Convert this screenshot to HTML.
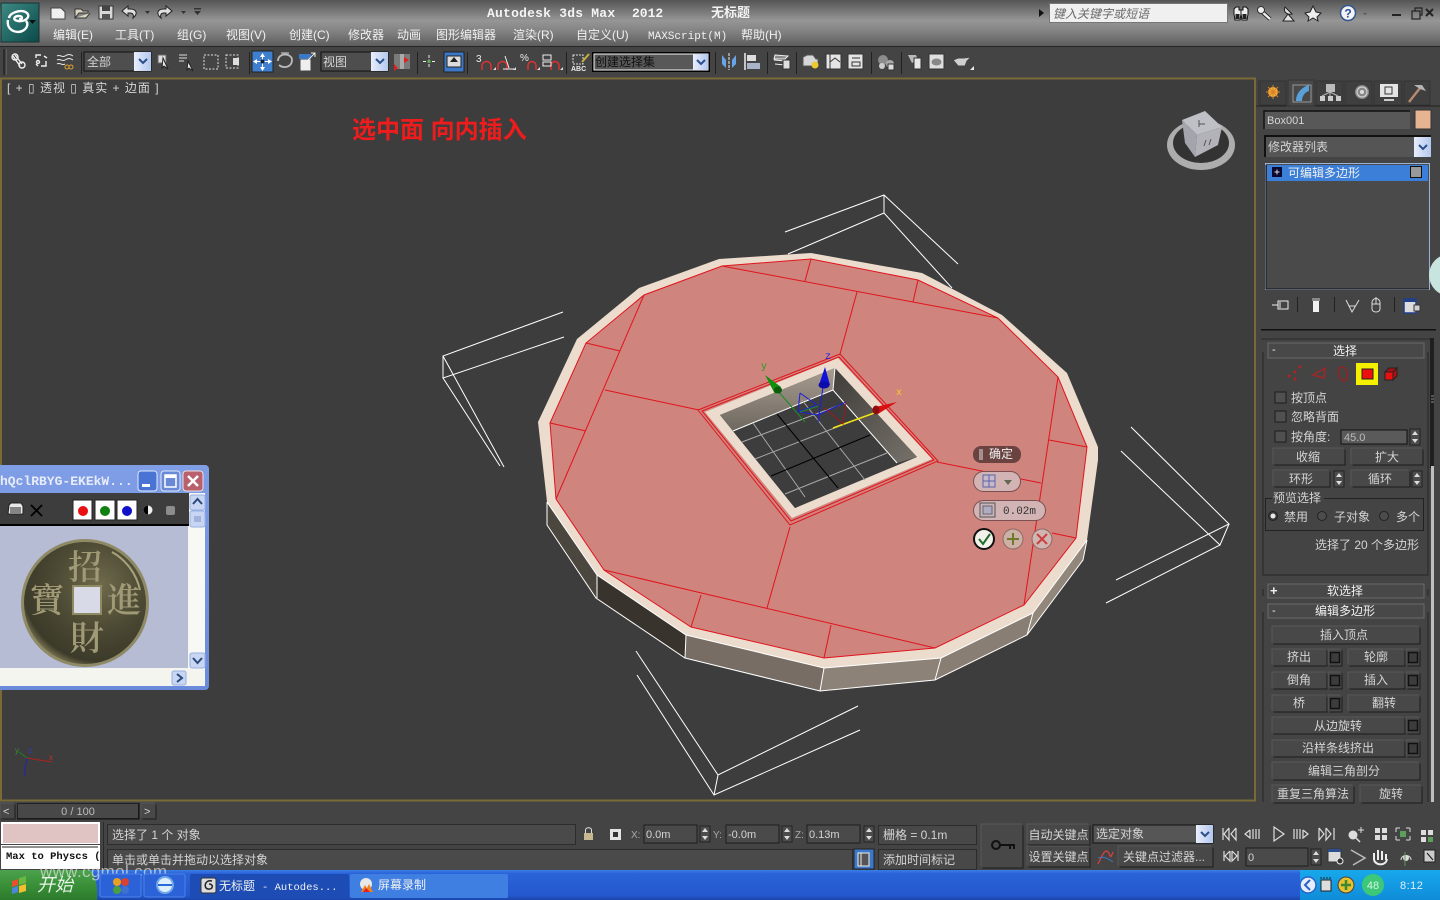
<!DOCTYPE html>
<html lang="zh"><head><meta charset="utf-8"><title>Autodesk 3ds Max 2012</title>
<style>
html,body{margin:0;padding:0;width:1440px;height:900px;overflow:hidden;background:#3d3d3d}
svg{display:block;position:absolute;left:0;top:0}
text{font-family:"Liberation Sans","Noto Sans CJK SC",sans-serif;font-size:12px;fill:#d4d4d4}
.m{text-anchor:middle}
.w{fill:#f0f0f0}
.mono{font-family:"Liberation Mono","Noto Sans CJK SC",monospace}
.b{fill:#484848;stroke:none;filter:drop-shadow(1px 1px 0 #1c1c1c) drop-shadow(-1px -1px 0 #585858)}
.f{fill:#585858;stroke:#222;stroke-width:1}
.e{fill:#4a4a4a;stroke:#1d1d1d;stroke-width:1}
.sm{fill:#3c3c3c;stroke:#111;stroke-width:1.5}
.bl{fill:none;stroke:#eee;stroke-width:1}
.rd{fill:none;stroke:#e0141c;stroke-width:1}
.wt{fill:none;stroke:#fff;stroke-width:1}
.ic{fill:none;stroke:#ddd;stroke-width:1.4}
.ib{fill:none;stroke:#f0f0f0;stroke-width:1.4}
</style></head><body>
<svg width="1440" height="900" viewBox="0 0 1440 900" xmlns="http://www.w3.org/2000/svg">
<defs>
<linearGradient id="top" x1="0" y1="0" x2="0" y2="1"><stop offset="0" stop-color="#555"/><stop offset=".45" stop-color="#969696"/><stop offset=".72" stop-color="#7e7e7e"/><stop offset="1" stop-color="#5c5c5c"/></linearGradient>
<linearGradient id="tb" x1="0" y1="0" x2="0" y2="1"><stop offset="0" stop-color="#3a7ee8"/><stop offset=".12" stop-color="#2a63d8"/><stop offset=".85" stop-color="#2458cf"/><stop offset="1" stop-color="#1a45a8"/></linearGradient>
<linearGradient id="st" x1="0" y1="0" x2="0" y2="1"><stop offset="0" stop-color="#4da24d"/><stop offset=".5" stop-color="#3a9038"/><stop offset="1" stop-color="#2c7a2c"/></linearGradient>
<linearGradient id="tray" x1="0" y1="0" x2="0" y2="1"><stop offset="0" stop-color="#18a8ec"/><stop offset="1" stop-color="#0f8cd8"/></linearGradient>
<linearGradient id="logo" x1="0" y1="0" x2="1" y2="1"><stop offset="0" stop-color="#3d8a84"/><stop offset="1" stop-color="#0b4a48"/></linearGradient>
<linearGradient id="win" x1="0" y1="0" x2="0" y2="1"><stop offset="0" stop-color="#7f9ee6"/><stop offset="1" stop-color="#6a8adb"/></linearGradient>
<linearGradient id="wall1" x1="0" y1="0" x2="0" y2="1"><stop offset="0" stop-color="#a89c90"/><stop offset="1" stop-color="#6e6860"/></linearGradient>
<linearGradient id="wall2" x1="0" y1="0" x2="1" y2="1"><stop offset="0" stop-color="#3f3d3a"/><stop offset="1" stop-color="#77716a"/></linearGradient>
<linearGradient id="chev" x1="0" y1="0" x2="1" y2="0"><stop offset="0" stop-color="#e8eefc"/><stop offset="1" stop-color="#b4c8ee"/></linearGradient>
<radialGradient id="coin" cx=".62" cy=".35" r=".7"><stop offset="0" stop-color="#6e6a4c"/><stop offset=".55" stop-color="#4b4833"/><stop offset=".9" stop-color="#3c3a29"/><stop offset="1" stop-color="#7a7552"/></radialGradient>
<g id="chv"><path d="M-4-2 0 2 4-2" fill="none" stroke="#2a4f8e" stroke-width="2"/></g>
<g id="spin"><rect x="-5" y="-8" width="10" height="16" fill="#4c4c4c" stroke="#222"/><path d="M-3-2 0-6 3-2zM-3 2 0 6 3 2z" fill="#ddd"/></g>
</defs>

<!-- base chrome -->
<rect width="1440" height="900" fill="#444"/>
<rect width="1440" height="46" fill="url(#top)"/>
<rect y="46" width="1440" height="1" fill="#262626"/>
<rect y="47" width="1440" height="30" fill="#444"/>

<!-- viewport -->
<rect x="1" y="78.5" width="1254" height="722" fill="#3d3d3d" stroke="#7a6a38" stroke-width="2"/>

<!-- wireframe box brackets -->
<g fill="none" stroke="#fff" stroke-width="1">
<path d="M785 232 884 195 958 264M788 254 884 213 952 288M884 195V213" fill="none"/>
<path d="M563 312 443 356 504 467M564 337 443 378 500 466M443 356V378" fill="none"/>
<path d="M1131 427 1229 524 1116 580M1121 451 1220 545 1106 603M1229 524 1220 545" fill="none"/>
<path d="M636 651 718 775 858 706M637 675 714 795 860 730M718 775 714 795" fill="none"/>
</g>

<!-- sides -->
<polygon points="547,502 597,575 596,598 547,525" fill="#4b473f"/>
<polygon points="597,575 686,635 685,658 596,598" fill="#39332d"/>
<polygon points="686,635 824,668 820,691 685,658" fill="#776d64"/>
<polygon points="824,668 941,658 935,680 820,691" fill="#8c8278"/>
<polygon points="941,658 1033,613 1027,635 935,680" fill="#887e74"/>
<polygon points="1033,613 1087,540 1083,560 1027,635" fill="#91877a"/>
<path d="M547 502 547 525 596 598 685 658 820 691 935 680 1027 635 1083 560 1087 540M597 575V598M686 635 685 658M824 668 820 691M941 658 935 680M1033 613 1027 635" class="wt"/>
<!-- rim -->
<polygon points="538,422 577,339 639,288 719,259 811,253 922,273 1002,315 1067,373 1098,447 1098,460 1087,540 1033,613 941,658 824,668 686,635 597,575 547,502" fill="#ecdccd"/>
<path d="M547 502 597 575 686 635 824 668 941 658 1033 613 1087 540" class="wt"/>
<!-- top -->
<polygon points="550,423 586,343 644,295 722,266 811,259 918,280 998,318 1058,377 1087,447 1076,538 1024,605 935,648 824,658 691,627 604,570 556,499" fill="#d0847e" stroke="#e0141c" stroke-width="1"/>
<!-- polygon red lines -->
<path class="rd" d="M722 266 998 318M811 259 805 281M918 280 913 302M857 292 840 354M644 295 556 499M586 343 620 351M550 423 586 431M605 390 699 410M1058 377 1024 605M1049 440 1087 447M1076 538 1052 533M937 462 1041 483M790 527 767 608M604 570 935 648M701 595 691 627M831 625 824 658"/>
<!-- hole -->
<polygon points="698,410 840,354 938,461 790,525" fill="#d0847e" stroke="#e0141c" stroke-width="1"/>
<polygon points="702,411 839,357 934,460 791,521" fill="#d0847e" stroke="#e0141c" stroke-width="1"/>
<polygon points="705,412 838,358 932,459 792,518" fill="#ecdccd"/>
<polygon points="720,415 835,368 917,457 795,508" fill="#3d3d3d"/>
<polygon points="720,415 835,368 833,390 733,431" fill="url(#wall1)"/>
<polygon points="835,368 917,457 897,463 833,390" fill="url(#wall2)"/>
<polygon points="733,431 833,390 897,463 795,508" fill="#3d3d3d"/>
<path d="M733 431 833 390 897 463M835 368 833 390" class="wt"/>
<path d="M753 423 805 497M802 400 865 480M742 442 840 405M755 459 850 422M785 494 887 453" fill="none" stroke="#a9a9a9" stroke-width="1"/>
<path d="M777 414 838 488M771 476 870 435" fill="none" stroke="#000" stroke-width="1"/>
<!-- gizmo -->
<path d="M777 390 805 422" stroke="#1e8c1e" stroke-width="1" fill="none"/>
<path d="M823 387 818 422" stroke="#1c1ce0" stroke-width="1" fill="none"/>
<path d="M833 428 877 412" stroke="#f0e21a" stroke-width="1.5" fill="none"/>
<path d="M800 393 798 412 817 405 800 393M818 415 846 402M818 415 800 412" stroke="#1c1ce0" fill="none" stroke-width="1"/>
<path d="M846 402 843 424 825 408" stroke="#a01818" fill="none" stroke-width="1"/>
<path d="M800 412 818 406" stroke="#1e8c1e" fill="none" stroke-width="1"/>
<polygon points="765,375 781,387 775,394" fill="#109010"/>
<ellipse cx="778" cy="390" rx="4" ry="3.5" fill="#0c5c0c"/>
<polygon points="825,367 830,385 819,385" fill="#1010d8"/>
<ellipse cx="824" cy="385" rx="5.5" ry="3.5" fill="#0c0ca8"/>
<polygon points="897,402 875,407 878,414" fill="#d81010"/>
<ellipse cx="876" cy="410" rx="3.5" ry="4.5" fill="#900c0c"/>
<text x="761" y="369" style="font-size:10px;fill:#1ea01e;font-family:'Liberation Mono'">y</text>
<text x="825" y="359" style="font-size:10px;fill:#2020e0;font-family:'Liberation Mono'">z</text>
<text x="896" y="395" style="font-size:10px;fill:#f0d020;font-family:'Liberation Mono'">x</text>

<!-- caddy -->
<rect x="973" y="446" width="48" height="17" rx="8" fill="#6a4240"/>
<path d="M980 449V460M982 449V460" stroke="#ddd" stroke-width="1"/>
<text x="989" y="458" class="w">确定</text>
<rect x="973.500" y="471.500" width="47" height="20" rx="10" fill="#d2b4b4" stroke="#7a5050"/>
<rect x="983" y="475" width="12" height="12" fill="#c8b8c8" stroke="#5a64a8"/><path d="M989 475V487M983 481H995" stroke="#5a64a8"/>
<path d="M1004 480H1012L1008 485z" fill="#665"/>
<rect x="973.500" y="500.500" width="72" height="20" rx="10" fill="#d2b4b4" stroke="#7a5050"/>
<rect x="980" y="503" width="15" height="14" fill="#c9b4bc" stroke="#555"/><rect x="983" y="506" width="9" height="8" fill="#b0acc4" stroke="#666"/>
<text x="1003" y="514" class="mono" style="fill:#333;font-size:11px">0.02m</text>
<circle cx="984" cy="539" r="10" fill="#f2f2ea" stroke="#111" stroke-width="2"/>
<path d="M979 539 983 544 990 534" fill="none" stroke="#1f6a2e" stroke-width="2"/>
<circle cx="1013" cy="539" r="10" fill="#cdb0a6" stroke="#8a6a64"/>
<path d="M1013 533V545M1007 539H1019" stroke="#6c7a2a" stroke-width="2"/>
<circle cx="1042" cy="539" r="10" fill="#d2b4b0" stroke="#8a6a64"/>
<path d="M1037 534 1047 544M1047 534 1037 544" stroke="#c84040" stroke-width="2"/>

<!-- viewport label & title -->
<text x="7" y="92" style="letter-spacing:1px">[ + ▯ 透视 ▯ 真实 + 边面 ]</text>
<text x="352" y="138" style="font-size:24px;font-weight:bold;fill:#ee1c1c">选中面 向内插入</text>

<!-- viewcube -->
<ellipse cx="1201" cy="145" rx="34" ry="25" fill="#adadad"/>
<ellipse cx="1201" cy="143" rx="28" ry="20" fill="#333"/>
<polygon points="1182,120 1205,111 1222,127 1197,135" fill="#bfbfc6"/>
<polygon points="1182,120 1197,135 1195,157 1185,143" fill="#a4a4ac"/>
<polygon points="1197,135 1222,127 1218,145 1195,157" fill="#b2b2b8"/>
<path d="M1199 120V127M1199 124H1205M1206 140 1204 146M1211 139 1209 145" stroke="#555" fill="none"/>

<!-- tripod -->
<path d="M27 758 24 776" stroke="#2020c0"/><path d="M27 758 52 762" stroke="#b02020"/><path d="M27 758 19 752" stroke="#208020"/>
<text x="15" y="753" style="font-size:8px;fill:#389038">y</text><text x="28" y="753" style="font-size:8px;fill:#3838c0">z</text><text x="49" y="760" style="font-size:8px;fill:#c03030">x</text>

<!-- title bar -->
<text x="487" y="17" class="mono" style="font-size:13px;font-weight:bold;fill:#f4f4f4;letter-spacing:.22px">Autodesk 3ds Max</text>
<text x="632" y="17" class="mono" style="font-size:13px;font-weight:bold;fill:#f4f4f4">2012</text>
<text x="711" y="17" style="font-weight:bold;fill:#f4f4f4;font-size:13px">无标题</text>

<!-- app logo -->
<rect x="1" y="3" width="38" height="39" fill="url(#logo)" stroke="#1b2f2f"/>
<path d="M9 18C10 12 22 9 27 13 31 17 25 22 18 21 12 20 14 16 19 16 23 16 23 20 19 19M8 20C6 30 17 35 24 30 28 27 28 23 26 21" fill="none" stroke="#fff" stroke-width="2.4"/>
<path d="M29 20H36L32.500 24z" fill="#111"/>

<!-- quick access -->
<path d="M51 8H61L65 12V19H51z" fill="#f0f0f0" stroke="#444"/>
<path d="M75 18V9H81L83 11H88V13H79L75 18H86L90 13" fill="#d8d4c0" stroke="#333"/>
<rect x="99" y="6" width="14" height="13" fill="#d8d8d8" stroke="#333"/><rect x="102" y="6" width="8" height="5" fill="#444"/><rect x="102" y="14" width="8" height="5" fill="#555"/>
<path d="M133 18C138 14 137 9 130 9H128V6L122 11 128 16V13H130C133 13 134 15 133 18z" fill="#e0e0e0" stroke="#222"/>
<path d="M161 18C156 14 157 9 164 9H166V6L172 11 166 16V13H164C161 13 160 15 161 18z" fill="#e0e0e0" stroke="#222"/>
<path d="M145 11H150L147.500 14zM181 11H186L183.500 14zM194 8H201V9.500H194zM194 11H201L197.500 15z" fill="#333"/>

<!-- menu -->
<g>
<text x="53" y="39" class="w">编辑(E)</text>
<text x="115" y="39" class="w">工具(T)</text>
<text x="177" y="39" class="w">组(G)</text>
<text x="226" y="39" class="w">视图(V)</text>
<text x="289" y="39" class="w">创建(C)</text>
<text x="348" y="39" class="w">修改器</text>
<text x="397" y="39" class="w">动画</text>
<text x="436" y="39" class="w">图形编辑器</text>
<text x="513" y="39" class="w">渲染(R)</text>
<text x="576" y="39" class="w">自定义(U)</text>
<text x="648" y="39" class="w mono" style="font-size:11px">MAXScript(M)</text>
<text x="741" y="39" class="w">帮助(H)</text>
</g>

<!-- search + title icons -->
<path d="M1039 9 1044 13 1039 17z" fill="#111"/>
<rect x="1049.500" y="3.500" width="178" height="19" fill="#f0f0f0" stroke="#777"/>
<text x="1053" y="18" style="fill:#6a6a6a;font-style:italic">键入关键字或短语</text>
<g stroke="#111"><path d="M1236 7H1239V10H1241V14L1240 20H1235L1234 14V9z" fill="#eee"/><path d="M1246 7H1243V10H1241V14L1242 20H1247L1248 14V9z" fill="#eee"/></g>
<rect x="1235.500" y="14" width="4" height="5" fill="#222"/><rect x="1242.500" y="14" width="4" height="5" fill="#222"/>
<path d="M1260 10 1270 19" stroke="#111" stroke-width="4" fill="none"/><path d="M1260 10 1270 19" stroke="#eee" stroke-width="2.500" fill="none"/><circle cx="1261" cy="10" r="3.500" fill="#eee" stroke="#333"/>
<path d="M1285 7C1283 12 1287 15 1292 14zM1283 21 1288 14 1294 21z" fill="#e4e4e4" stroke="#222"/>
<polygon points="1313,6 1316,12 1321,13 1317,17 1318,21 1313,18 1308,21 1309,17 1305,13 1310,12" fill="#eee" stroke="#222"/>
<circle cx="1348" cy="13" r="7.500" fill="#f2f2f2" stroke="#33548e" stroke-width="1.500"/>
<text x="1348" y="17.500" class="m" style="font-weight:bold;fill:#2a4f9e">?</text>
<path d="M1363 13H1367L1365 15z" fill="#555"/>
<rect x="1392" y="14" width="9" height="2" fill="#222"/>
<rect x="1412" y="11" width="8" height="8" fill="none" stroke="#222" stroke-width="1.200"/><path d="M1415 11V8H1422V15H1420" fill="none" stroke="#222" stroke-width="1.200"/>
<path d="M1426 9 1433 16M1433 9 1426 16" stroke="#222" stroke-width="2"/>

<!-- main toolbar -->
<rect x="3" y="49" width="2" height="26" fill="#2c2c2c"/><rect x="6" y="49" width="1" height="26" fill="#5d5d5d"/>
<g class="ib">
<path d="M13 56 20 66M15 55 22 64" /><circle cx="15" cy="57" r="3"/><circle cx="22" cy="65" r="3"/>
<path d="M36 58 36 55 41 55M46 61 46 66 41 66M36 64 38 66M44 56 47 58"/><circle cx="38" cy="62" r="1.500"/>
</g>
<path d="M57 56C60 54 62 58 65 56S70 54 73 56M57 60C60 58 62 62 65 60S70 58 73 60M57 64C60 62 62 66 65 64" fill="none" stroke="#e8e8e8" stroke-width="1"/>
<circle cx="67" cy="67" r="2" fill="none" stroke="#e0a030"/><circle cx="71" cy="67" r="2" fill="none" stroke="#e0a030"/>
<rect x="81" y="52" width="1" height="22" fill="#222"/>
<rect x="84" y="52" width="67" height="19" fill="#4e4e4e" stroke="#111"/>
<text x="87" y="66">全部</text>
<rect x="134" y="52" width="17" height="19" fill="url(#chev)"/><use href="#chv" x="143" y="61"/>
<path d="M158 55H166V63H158z" fill="#ddd" stroke="#666"/><path d="M163 58 168 69 164 66 162 68z" fill="#eee" stroke="#222"/>
<path d="M179 55H187M179 58H187M179 61H184" stroke="#ddd"/><path d="M188 61 193 71 189 68 187 70z" fill="#eee" stroke="#222"/>
<rect x="204" y="55" width="14" height="14" fill="none" stroke="#e0e0e0" stroke-dasharray="2 1.500"/>
<rect x="226" y="55" width="12" height="13" fill="none" stroke="#e0e0e0" stroke-dasharray="2 1.500"/><rect x="233" y="58" width="6" height="7" fill="#ddd"/>
<rect x="249" y="52" width="1" height="22" fill="#222"/>
<rect x="252" y="51" width="21" height="21" fill="#3f7fd0" stroke="#222"/>
<path d="M262.500 53 265 57H260zM262.500 71 265 67H260zM253 61.500 257 59V64zM272 61.500 268 59V64z" fill="#fff"/><path d="M262.500 56V68M256 61.500H270" stroke="#fff"/><circle cx="262.500" cy="61.500" r="2" fill="#123"/>
<path d="M278 61C278 52 292 53 292 60S284 69 279 65" fill="none" stroke="#bbb" stroke-width="1.800"/><path d="M281 53H289" stroke="#ddd"/>
<rect x="300" y="59" width="11" height="12" fill="#eee" stroke="#444"/><path d="M299 54H311V59H299z" fill="#3c78c8"/><path d="M308 60 315 53M311 53H315V57" stroke="#eee" fill="none"/>
<rect x="321" y="52" width="67" height="19" fill="#4e4e4e" stroke="#111"/>
<text x="323" y="66">视图</text>
<rect x="371" y="52" width="17" height="19" fill="url(#chev)"/><use href="#chv" x="380" y="61"/>
<rect x="394" y="54" width="16" height="15" fill="#7a7a7a"/><rect x="400" y="54" width="4" height="15" fill="#aaa"/>
<path d="M394 64 398 68 394 71zM404 57 409 60 404 63z" fill="#e02020"/>
<rect x="417" y="52" width="1" height="22" fill="#222"/>
<path d="M429 55V68M423 61.500H436" stroke="#eee" stroke-dasharray="3 1.500"/><rect x="427.500" y="60" width="3" height="3" fill="#5ab05a"/>
<rect x="444" y="52" width="20" height="20" fill="#3c78c8" stroke="#222"/>
<rect x="447" y="56" width="14" height="11" fill="#dcdcdc" stroke="#222"/><path d="M454 57 458 62H450z" fill="#222"/>
<rect x="467" y="52" width="1" height="22" fill="#222"/>
<g fill="none" stroke="#e03030" stroke-width="1.500">
<path d="M482 70V66C482 60 491 60 491 66V70"/><path d="M498 70V66C498 60 507 60 507 66V70"/><path d="M528 70V66C528 60 536 60 536 66V70"/><path d="M551 70V66C551 60 559 60 559 66V70"/>
</g>
<text x="476" y="62" style="font-size:10px;fill:#eee">3</text>
<path d="M505 56 509 68M503 69H514" stroke="#eee" fill="none"/>
<text x="520" y="61" style="font-size:10px;fill:#eee">%</text>
<path d="M543 55H551V60H543zM543 62H551V66H543z" stroke="#eee" fill="none"/>
<path d="M493 70H496V67zM513 70H516V67zM537 70H540V67zM560 70H563V67z" fill="#ddd"/>
<rect x="566" y="52" width="1" height="22" fill="#222"/>
<rect x="573" y="55" width="10" height="9" fill="none" stroke="#ddd" stroke-dasharray="2 1"/><path d="M582 62 589 54" stroke="#c8b040" stroke-width="2"/>
<text x="571" y="71" style="font-size:7px;fill:#eee;font-weight:bold">ABC</text>
<rect x="592" y="52" width="118" height="20" fill="#000"/>
<rect x="594" y="54" width="114" height="16" fill="#585858" stroke="#f5f5f5"/>
<text x="595" y="66" style="fill:#111">创建选择集</text>
<rect x="693" y="54" width="15" height="16" fill="url(#chev)"/><use href="#chv" x="701" y="62"/>
<rect x="715" y="52" width="1" height="22" fill="#222"/>
<path d="M722 55 726 60V68L722 64z" fill="#6aa4e8"/><path d="M736 55 732 60V68L736 64z" fill="#6aa4e8"/><path d="M729 53V70" stroke="#eee" stroke-dasharray="3 1"/>
<path d="M745 53V70" stroke="#eee" stroke-width="1.500"/><rect x="747" y="55" width="9" height="6" fill="#ddd"/><rect x="747" y="63" width="13" height="6" fill="#aab4c8"/>
<rect x="767" y="52" width="1" height="22" fill="#222"/>
<path d="M775 55 788 56 785 59H774zM774 60 786 61M775 64 785 65" stroke="#eee" fill="#888"/><rect x="783" y="60" width="7" height="9" fill="#dfdfdf" stroke="#333"/>
<rect x="796" y="52" width="1" height="22" fill="#222"/>
<path d="M803 57 807 55H813L816 59H818V66H803z" fill="#d6d6d6" stroke="#555"/><circle cx="815" cy="65" r="3.500" fill="#f0c830"/>
<rect x="826" y="54" width="15" height="15" fill="#e4e4e4" stroke="#333"/><path d="M830 54V69M830 62 835 58 840 62" stroke="#333" fill="none"/>
<rect x="848" y="54" width="15" height="15" fill="#e4e4e4" stroke="#333"/><path d="M852 58H860M852 62H860V66H852z" stroke="#333" fill="none"/>
<rect x="871" y="52" width="1" height="22" fill="#222"/>
<circle cx="883" cy="60" r="5" fill="#8c8c8c"/><circle cx="890" cy="64" r="4" fill="#aaa"/><circle cx="882" cy="66" r="3" fill="#ccc"/><rect x="888" y="64" width="6" height="6" fill="#ddd" stroke="#333"/>
<rect x="901" y="52" width="1" height="22" fill="#222"/>
<path d="M908 55H916L918 60 912 63z" fill="#bbb"/><rect x="914" y="58" width="7" height="11" fill="#e8e8e8" stroke="#333"/>
<rect x="929" y="54" width="15" height="15" fill="#dedede" stroke="#333"/><ellipse cx="936.500" cy="62" rx="5" ry="3.500" fill="#888"/>
<path d="M953 60 958 58H964L971 57 967 61 965 66H958z" fill="#d0d0d0" stroke="#444"/>
<path d="M970 70H974V66z" fill="#eee"/>

<!-- right panel -->
<rect x="1256" y="78" width="184" height="724" fill="#444"/>
<rect x="1258" y="80" width="1" height="26" fill="#383838"/>
<g fill="#3f3f3f" stroke="#333"><rect x="1260" y="81" width="26" height="24"/><rect x="1288" y="80" width="26" height="26" fill="#484848"/><rect x="1316" y="81" width="27" height="24"/><rect x="1345" y="81" width="27" height="24"/><rect x="1374" y="81" width="28" height="24"/><rect x="1404" y="81" width="26" height="24"/></g>
<path d="M1256 106H1287M1315 106H1440" stroke="#222"/>
<circle cx="1273" cy="92" r="5" fill="#f2b040"/><path d="M1273 85V99M1266 92H1280M1268 87 1278 97M1278 87 1268 97" stroke="#d88020"/>
<rect x="1293" y="85" width="18" height="17" fill="none" stroke="#999"/>
<path d="M1296 101C1296 93 1302 87 1309 85V91C1305 92 1302 96 1302 101z" fill="#5aa0d8"/>
<rect x="1326" y="84" width="9" height="8" fill="#bbb"/><rect x="1320" y="96" width="5" height="5" fill="#ccc"/><rect x="1328" y="96" width="5" height="5" fill="#ccc"/><rect x="1336" y="96" width="5" height="5" fill="#ccc"/><path d="M1330 92V96M1322 96 1330 92 1338 96" stroke="#bbb" fill="none"/>
<circle cx="1362" cy="92" r="7" fill="#888"/><circle cx="1362" cy="92" r="5" fill="none" stroke="#ddd"/><circle cx="1362" cy="92" r="2" fill="#ddd"/>
<rect x="1380" y="84" width="18" height="13" fill="#e4e4e4"/><rect x="1385" y="87" width="7" height="7" fill="none" stroke="#333"/><path d="M1384 100H1394" stroke="#ccc" stroke-width="2"/>
<path d="M1409 102 1420 88" stroke="#b48a70" stroke-width="2.500"/><path d="M1414 85H1422L1426 91 1420 89z" fill="#b5b5b5"/>

<rect x="1264" y="111" width="146" height="18" fill="#585858"/><path d="M1264 129V111H1410" stroke="#111" stroke-width="1.500" fill="none"/>
<text x="1267" y="124" style="font-size:11px">Box001</text>
<rect x="1415" y="110" width="16" height="19" fill="#e6b491" stroke="#333"/>
<rect x="1265" y="136" width="166" height="21" fill="#555"/><path d="M1265 157V136H1431" stroke="#111" stroke-width="2" fill="none"/>
<text x="1268" y="151">修改器列表</text>
<rect x="1414" y="137" width="17" height="20" fill="url(#chev)"/><use href="#chv" x="1423" y="147"/>
<rect x="1265.500" y="163.500" width="164" height="126" fill="#4a4a4a" stroke="#9ab4d8"/>
<path d="M1266 165V289H1429" stroke="#111" fill="none"/>
<rect x="1267" y="165" width="161" height="16" fill="#3b7fd8"/>
<rect x="1272" y="167" width="10" height="10" fill="#0a0a30"/><path d="M1274.500 172H1279.500M1277 169.500V174.500" stroke="#ddd"/>
<text x="1288" y="177" class="w">可编辑多边形</text>
<rect x="1410.500" y="166.500" width="11" height="11" fill="#999" stroke="#111"/>

<path d="M1272 305H1278M1278 301H1288V309H1278z" stroke="#eee" fill="none"/><path d="M1280 302V308" stroke="#eee"/>
<rect x="1297" y="297" width="1" height="15" fill="#222"/>
<rect x="1313" y="300" width="6" height="12" fill="#f2f2f2"/><rect x="1312" y="298" width="8" height="3" fill="#888"/>
<rect x="1334" y="297" width="1" height="15" fill="#222"/>
<path d="M1346 300 1352 312 1359 300M1349 306H1355" stroke="#ddd" fill="none"/>
<path d="M1372 303C1372 297 1380 297 1380 303V309C1380 313 1372 313 1372 309z" fill="none" stroke="#ddd"/><path d="M1376 297V304M1372 304H1380" stroke="#ddd"/>
<rect x="1394" y="297" width="1" height="15" fill="#222"/>
<rect x="1404" y="299" width="12" height="14" fill="#dcdcdc" stroke="#1f3f88" stroke-width="1.500"/><rect x="1404" y="299" width="12" height="3" fill="#1f3f88"/><rect x="1414" y="305" width="6" height="6" fill="#cfcfcf" stroke="#333"/>
<rect x="1261" y="329" width="175" height="1.500" fill="#111"/>

<!-- scrollbar -->
<rect x="1430" y="338" width="4" height="130" fill="#1f1f1f"/>
<rect x="1431" y="466" width="3" height="336" fill="#bfbfbf"/>
<path d="M1431 396H1434M1431 399H1434M1431 402H1434" stroke="#888"/>
<!-- rollout 选择 -->
<path d="M1263 352V575H1428V352" fill="none" stroke="#262626"/>
<path d="M1261 339H1430" stroke="#2a2a2a"/>
<rect x="1268" y="343" width="156" height="15" fill="#484848" stroke="#6a6a6a"/>
<text x="1272" y="353" class="w" style="font-size:11px">-</text>
<text x="1345" y="355" class="m w">选择</text>
<g fill="#b02222"><circle cx="1289" cy="376" r="1.500"/><circle cx="1295" cy="372" r="1.500"/><circle cx="1300" cy="367" r="1.500"/><circle cx="1295" cy="379" r="1.500"/></g>
<path d="M1313 375 1325 368 1324 378z" fill="none" stroke="#a02828" stroke-width="1.500"/>
<path d="M1342 367C1348 367 1349 380 1344 381 1339 380 1340 375 1338 372 1338 369 1340 367 1342 367" fill="none" stroke="#902424" stroke-width="1.600"/>
<rect x="1356" y="363" width="22" height="22" fill="#f4f000"/>
<rect x="1362" y="369" width="11" height="10" fill="#ee1010" stroke="#222"/>
<path d="M1385 372H1393V380H1385z" fill="#e81010" stroke="#222"/><path d="M1385 372 1389 368H1397L1393 372zM1393 372 1397 368V376L1393 380z" fill="#b01010" stroke="#222"/>
<rect x="1275" y="392" width="11" height="11" fill="#505050" stroke="#1d1d1d"/>
<text x="1291" y="402">按顶点</text>
<rect x="1275" y="411" width="11" height="11" fill="#505050" stroke="#1d1d1d"/>
<text x="1291" y="421">忽略背面</text>
<rect x="1275" y="431" width="11" height="11" fill="#505050" stroke="#1d1d1d"/>
<text x="1291" y="441">按角度:</text>
<rect x="1341" y="430" width="66" height="14" fill="#5a5a5a" stroke="#111"/>
<text x="1344" y="441" style="font-size:11px;fill:#bbb">45.0</text>
<use href="#spin" x="1415" y="437"/>
<rect x="1273.500" y="448.500" width="71" height="16" class="b"/><text x="1308" y="461" class="m">收缩</text>
<rect x="1351.500" y="448.500" width="71" height="16" class="b"/><text x="1387" y="461" class="m">扩大</text>
<rect x="1273.500" y="470.500" width="56" height="16" class="b"/><text x="1301" y="483" class="m">环形</text>
<use href="#spin" x="1339" y="479"/>
<rect x="1351.500" y="470.500" width="58" height="16" class="b"/><text x="1380" y="483" class="m">循环</text>
<use href="#spin" x="1417" y="479"/>
<rect x="1265.500" y="498.500" width="158" height="32" fill="none" stroke="#222"/>
<rect x="1272" y="492" width="52" height="12" fill="#444"/>
<text x="1273" y="502">预览选择</text>
<circle cx="1273" cy="516" r="4.500" fill="#3c3c3c" stroke="#222"/><circle cx="1273" cy="516" r="2.500" fill="#e8e8e8"/>
<text x="1284" y="521">禁用</text>
<circle cx="1322" cy="516" r="4.500" fill="#4c4c4c" stroke="#222"/>
<text x="1334" y="521">子对象</text>
<circle cx="1384" cy="516" r="4.500" fill="#4c4c4c" stroke="#222"/>
<text x="1396" y="521">多个</text>
<text x="1315" y="549">选择了 20 个多边形</text>

<!-- rollouts -->
<rect x="1268" y="584" width="156" height="14" fill="#484848" stroke="#6a6a6a"/>
<text x="1270" y="595" class="w" style="font-size:13px;font-weight:bold">+</text>
<text x="1345" y="595" class="m w">软选择</text>
<rect x="1268" y="604" width="156" height="14" fill="#484848" stroke="#6a6a6a"/>
<text x="1272" y="614" class="w" style="font-size:11px">-</text>
<text x="1345" y="615" class="m w">编辑多边形</text>
<path d="M1263 612V802M1428 612V802M1263 589V596M1428 589V596" fill="none" stroke="#262626"/>

<rect x="1272.500" y="626.500" width="147" height="17" class="b"/><text x="1344" y="639" class="m">插入顶点</text>
<rect x="1272.500" y="649.500" width="54" height="16" class="b"/><text x="1299" y="661" class="m">挤出</text>
<rect x="1328.500" y="649.500" width="13" height="16" class="b"/><rect x="1330.500" y="652.500" width="9" height="10" class="sm"/>
<rect x="1348.500" y="649.500" width="56" height="16" class="b"/><text x="1376" y="661" class="m">轮廓</text>
<rect x="1406.500" y="649.500" width="13" height="16" class="b"/><rect x="1408.500" y="652.500" width="9" height="10" class="sm"/>
<rect x="1272.500" y="672.500" width="54" height="16" class="b"/><text x="1299" y="684" class="m">倒角</text>
<rect x="1328.500" y="672.500" width="13" height="16" class="b"/><rect x="1330.500" y="675.500" width="9" height="10" class="sm"/>
<rect x="1348.500" y="672.500" width="56" height="16" class="b"/><text x="1376" y="684" class="m">插入</text>
<rect x="1406.500" y="672.500" width="13" height="16" class="b"/><rect x="1408.500" y="675.500" width="9" height="10" class="sm"/>
<rect x="1272.500" y="695.500" width="54" height="16" class="b"/><text x="1299" y="707" class="m">桥</text>
<rect x="1328.500" y="695.500" width="13" height="16" class="b"/><rect x="1330.500" y="698.500" width="9" height="10" class="sm"/>
<rect x="1348.500" y="695.500" width="71" height="16" class="b"/><text x="1384" y="707" class="m">翻转</text>
<rect x="1272.500" y="717.500" width="132" height="16" class="b"/><text x="1338" y="730" class="m">从边旋转</text>
<rect x="1406.500" y="717.500" width="13" height="16" class="b"/><rect x="1408.500" y="720.500" width="9" height="10" class="sm"/>
<rect x="1272.500" y="740.500" width="132" height="16" class="b"/><text x="1338" y="752" class="m">沿样条线挤出</text>
<rect x="1406.500" y="740.500" width="13" height="16" class="b"/><rect x="1408.500" y="743.500" width="9" height="10" class="sm"/>
<rect x="1272.500" y="762.500" width="147" height="17" class="b"/><text x="1344" y="775" class="m">编辑三角剖分</text>
<rect x="1272.500" y="785.500" width="81" height="17" class="b"/><text x="1313" y="798" class="m">重复三角算法</text>
<rect x="1360.500" y="785.500" width="61" height="17" class="b"/><text x="1391" y="798" class="m">旋转</text>

<!-- teal bubble -->
<circle cx="1450" cy="275" r="21" fill="#c8e4de"/>

<!-- timeline -->
<rect y="802" width="1256" height="68" fill="#444"/>
<rect x="0.500" y="803.500" width="14" height="15" class="b"/><text x="3" y="815" style="font-size:11px">&lt;</text>
<rect x="17.500" y="803.500" width="121" height="15" fill="#484848" stroke="#222"/><path d="M17 819H139V803" stroke="#111" fill="none"/>
<text x="78" y="815" class="m" style="font-size:11px;fill:#bbb">0 / 100</text>
<rect x="141.500" y="803.500" width="14" height="15" class="b"/><text x="144" y="815" style="font-size:11px">&gt;</text>

<!-- maxscript mini -->
<rect x="1" y="822" width="99" height="22" fill="#fff"/><rect x="3" y="824" width="95" height="19" fill="#e0c4c4"/>
<rect x="1" y="845" width="99" height="24" fill="#fff"/><path d="M2 847H98" stroke="#222"/>
<text x="6" y="859" class="mono" style="fill:#111;font-size:10.500px;font-weight:bold">Max to Physcs (</text>
<rect x="103" y="822" width="1" height="47" fill="#2a2a2a"/>

<!-- status -->
<rect x="107.500" y="824.500" width="468" height="20" fill="#4a4a4a" stroke="#2c2c2c"/>
<text x="112" y="839">选择了 1 个 对象</text>
<rect x="107.500" y="849.500" width="745" height="21" fill="#4a4a4a" stroke="#2c2c2c"/>
<text x="112" y="864">单击或单击并拖动以选择对象</text>

<rect x="584" y="833" width="9" height="7" fill="#c8b890"/><path d="M585.500 833V830C585.500 827 591.500 827 591.500 830V833" fill="none" stroke="#ddd"/>
<rect x="610" y="829" width="11" height="11" fill="#e4e4e4"/><rect x="613" y="832" width="5" height="5" fill="#333"/>
<text x="631" y="838" style="font-size:10px;fill:#aaa">X:</text>
<rect x="644" y="825" width="53" height="18" class="e"/><text x="646" y="838" style="font-size:11px">0.0m</text>
<use href="#spin" x="705" y="834"/>
<text x="713" y="838" style="font-size:10px;fill:#aaa">Y:</text>
<rect x="726" y="825" width="53" height="18" class="e"/><text x="728" y="838" style="font-size:11px">-0.0m</text>
<use href="#spin" x="787" y="834"/>
<text x="795" y="838" style="font-size:10px;fill:#aaa">Z:</text>
<rect x="807" y="825" width="53" height="18" class="e"/><text x="809" y="838" style="font-size:11px">0.13m</text>
<use href="#spin" x="869" y="834"/>
<rect x="878.500" y="825.500" width="98" height="19" fill="#484848" stroke="#2c2c2c"/>
<text x="883" y="839">栅格 = 0.1m</text>
<rect x="854" y="849" width="20" height="20" fill="#3c78c8" stroke="#222"/><rect x="858" y="853" width="11" height="13" fill="#555" stroke="#eee"/><path d="M861 853V866" stroke="#eee"/>
<rect x="878.500" y="849.500" width="98" height="20" fill="#484848" stroke="#2c2c2c"/>
<text x="883" y="864">添加时间标记</text>

<rect x="981.500" y="824.500" width="41" height="43" class="b"/>
<circle cx="996" cy="845" r="4" fill="none" stroke="#111" stroke-width="2"/><path d="M1000 845H1015M1010 845V849M1014 845V849" stroke="#111" stroke-width="2"/>
<rect x="1027.500" y="824.500" width="62" height="20" class="b"/><text x="1058.500" y="839" class="m">自动关键点</text>
<rect x="1027.500" y="846.500" width="62" height="20" class="b"/><text x="1058.500" y="861" class="m">设置关键点</text>
<rect x="1093" y="825" width="120" height="18" fill="#565656" stroke="#111"/><text x="1096" y="838">选定对象</text>
<rect x="1196" y="825" width="17" height="18" fill="url(#chev)"/><use href="#chv" x="1205" y="834"/>
<path d="M1098 864C1102 856 1105 848 1108 852S1110 860 1113 852" fill="none" stroke="#d84040" stroke-width="1.300"/><path d="M1098 858C1103 856 1108 858 1113 862" fill="none" stroke="#3a78c0"/>
<rect x="1118.500" y="846.500" width="94" height="20" class="b"/><text x="1123" y="861">关键点过滤器...</text>

<!-- anim controls -->
<g fill="none" stroke="#ddd" stroke-width="1.200">
<path d="M1223 828V840M1229 828 1224 834 1229 840V828M1236 828 1231 834 1236 840V828"/>
<path d="M1250 830 1245 834 1250 838V830M1253 829V839M1256 829V839M1259 829V839"/>
<path d="M1274 827V841L1284 834z"/>
<path d="M1294 829V839M1297 829V839M1300 829V839M1303 830 1308 834 1303 838V830"/>
<path d="M1319 828 1324 834 1319 840V828M1326 828 1331 834 1326 840V828M1334 828V840"/>
<path d="M1224 851V861M1230 851 1225 856 1230 861V851M1232 851 1237 856 1232 861V851M1238 851V861"/>
</g>
<rect x="1246" y="848" width="62" height="18" class="e"/><text x="1248" y="861" style="font-size:11px">0</text>
<use href="#spin" x="1316" y="857"/>
<rect x="1328" y="849" width="13" height="13" fill="#dcdcdc" stroke="#333"/><rect x="1328" y="849" width="13" height="3" fill="#2d4f90"/><circle cx="1340" cy="861" r="3" fill="#333" stroke="#eee"/>
<path d="M1351 850 1365 858 1353 865" fill="none" stroke="#bbb" stroke-width="1.500"/>
<path d="M1374 860V853M1378 860V850M1382 860V851M1386 860V854M1374 860C1376 866 1386 866 1387 859" stroke="#eee" stroke-width="2" fill="none"/>
<path d="M1401 860C1401 854 1411 854 1411 860" fill="none" stroke="#ddd"/><circle cx="1406" cy="858" r="3" fill="#ddd"/><path d="M1405 852V866" stroke="#5a9a5a"/>
<rect x="1424" y="850" width="11" height="12" fill="#ccc" stroke="#222"/><path d="M1427 853 1433 860" stroke="#111"/>
<circle cx="1353" cy="835" r="4.500" fill="#ddd"/><path d="M1356 838 1360 842" stroke="#ddd" stroke-width="1.500"/><path d="M1361 827V833M1358 830H1364" stroke="#ddd"/>
<g fill="#ddd"><rect x="1375" y="828" width="5" height="5"/><rect x="1382" y="828" width="5" height="5"/><rect x="1375" y="835" width="5" height="5"/><rect x="1382" y="835" width="5" height="5"/></g>
<path d="M1396 828H1400M1396 828V832M1410 828H1406M1410 828V832M1396 840H1400M1396 840V836M1410 840H1406M1410 840V836" stroke="#ddd" fill="none"/><rect x="1400" y="831" width="6" height="6" fill="#5aa05a"/>
<g fill="#ddd"><rect x="1421" y="830" width="5" height="5"/><rect x="1428" y="830" width="5" height="5"/><rect x="1421" y="837" width="5" height="5"/><rect x="1428" y="837" width="5" height="5" fill="#5aa05a"/></g>

<!-- floating window -->
<rect x="-3" y="465" width="212" height="225" rx="4" fill="url(#win)"/>
<rect x="0" y="493" width="205" height="193" fill="#f5f5f0"/>
<text x="0" y="485" class="mono" style="font-size:13px;font-weight:bold;fill:#e8ecf8">hQclRBYG-EKEkW...</text>
<rect x="138" y="471" width="19" height="20" rx="3" fill="#4a74d4" stroke="#e0e8fa"/><rect x="142" y="484" width="8" height="3" fill="#fff"/>
<rect x="161" y="471" width="19" height="20" rx="3" fill="#6a8ad8" stroke="#e0e8fa"/><rect x="165" y="475" width="11" height="12" fill="none" stroke="#fff" stroke-width="1.500"/><rect x="165" y="475" width="11" height="3" fill="#fff"/>
<rect x="183" y="471" width="20" height="20" rx="3" fill="#b8606c" stroke="#f0e0e4"/><path d="M188 476 198 486M198 476 188 486" stroke="#fff" stroke-width="2.500"/>
<rect x="0" y="493" width="189" height="32" fill="#3d3d3d"/>
<rect x="0" y="524" width="189" height="2" fill="#000"/>
<path d="M9 505 11 503H21L23 506V514H8z" fill="#e8e8e8" stroke="#222"/><path d="M10 508H21M10 510H21M10 512H21" stroke="#222"/>
<path d="M31 505 42 516M42 505 31 516" stroke="#000" stroke-width="1.800"/>
<rect x="73" y="500" width="19" height="20" fill="#fff" stroke="#222"/><circle cx="83" cy="511" r="5" fill="#e81010"/>
<rect x="95" y="500" width="20" height="20" fill="#fff" stroke="#222"/><circle cx="105" cy="511" r="5" fill="#108010"/>
<rect x="117" y="500" width="20" height="20" fill="#fff" stroke="#222"/><circle cx="127" cy="511" r="5" fill="#1010c8"/>
<circle cx="148" cy="510" r="4.500" fill="#eee"/><path d="M148 505.500A4.500 4.500 0 0 0 148 514.500z" fill="#000"/>
<rect x="166" y="506" width="9" height="9" rx="2" fill="#8c8c8c"/>
<rect x="189" y="493" width="16" height="176" fill="#f8f8f4"/>
<rect x="190" y="495" width="15" height="15" rx="2" fill="#c8d6f4" stroke="#98b0e0"/><path d="M193 504 197.500 499 202 504" fill="none" stroke="#2a4a7a" stroke-width="2"/>
<rect x="190" y="511" width="15" height="16" rx="2" fill="#c8d6f4" stroke="#98b0e0"/><path d="M194 517H201M194 519H201M194 521H201" stroke="#7a90c0"/>
<rect x="190" y="653" width="15" height="15" rx="2" fill="#c8d6f4" stroke="#98b0e0"/><path d="M193 658 197.500 663 202 658" fill="none" stroke="#2a4a7a" stroke-width="2"/>
<rect x="172" y="671" width="14" height="14" rx="2" fill="#c8d6f4" stroke="#98b0e0"/><path d="M177 674 182 678 177 682" fill="none" stroke="#2a4a7a" stroke-width="2"/>
<!-- image -->
<rect x="0" y="526" width="188" height="142" fill="#b6bcd4"/>
<circle cx="85" cy="603" r="64" fill="#8f8a66"/>
<circle cx="85" cy="603" r="61" fill="url(#coin)"/>
<path d="M112 552A58 58 0 0 1 140 590" fill="none" stroke="#a8a27c" stroke-width="2"/>
<rect x="72" y="585" width="30" height="30" fill="#8f8a62"/><rect x="74" y="587" width="26" height="26" fill="#d8dae8"/>
<text x="85" y="579" class="m" style="font-family:'Noto Serif CJK SC',serif;font-size:34px;fill:#a09a76;font-weight:600">招</text>
<text x="124" y="612" class="m" style="font-family:'Noto Serif CJK SC',serif;font-size:34px;fill:#a09a76;font-weight:600">進</text>
<text x="87" y="650" class="m" style="font-family:'Noto Serif CJK TC',serif;font-size:34px;fill:#a09a76;font-weight:600">財</text>
<text x="47" y="612" class="m" style="font-family:'Noto Serif CJK TC',serif;font-size:34px;fill:#a09a76;font-weight:600">寶</text>

<!-- taskbar -->
<rect y="870" width="1440" height="30" fill="url(#tb)"/>
<path d="M0 870H90C95 875 98 885 97 900H0z" fill="url(#st)"/>
<g><path d="M12 881 18 879V885L12 887z" fill="#e85030"/><path d="M19 878 26 876V883L19 885z" fill="#6ab840"/><path d="M12 888 18 886V892L12 894z" fill="#4a88e0"/><path d="M19 886 26 884V891L19 893z" fill="#f0c030"/></g>
<text x="37" y="891" style="font-size:18px;font-style:italic;fill:#e8f4e8">开始</text>
<text x="40" y="877" style="font-size:17px;fill:#e8e8e8;fill-opacity:.65;letter-spacing:.35px">www.cgmol.com</text>
<rect x="100" y="874" width="41" height="23" rx="2" fill="#2c62d8" stroke="#4a82e8"/>
<rect x="144" y="874" width="41" height="23" rx="2" fill="#2c62d8" stroke="#4a82e8"/>
<circle cx="117" cy="882" r="4" fill="#e8a020"/><circle cx="125" cy="882" r="4" fill="#d84030"/><circle cx="117" cy="890" r="4" fill="#4aa040"/><circle cx="125" cy="890" r="4" fill="#4070d0"/>
<circle cx="165" cy="885" r="8" fill="#dfeefc" stroke="#70a8e8" stroke-width="2"/><path d="M158 885H172" stroke="#2a6ad8" stroke-width="2"/>
<rect x="190" y="874" width="159" height="24" rx="2" fill="#1c4cb4"/>
<rect x="201" y="878" width="15" height="15" rx="2" fill="#dcdcdc" stroke="#333"/><path d="M212 881C205 879 203 888 208 889S214 884 209 884" fill="none" stroke="#222" stroke-width="1.500"/>
<text x="219" y="890" class="w" style="font-size:12px">无标题</text>
<text x="262" y="890" class="mono w" style="font-size:10.500px">- Autodes...</text>
<rect x="350" y="874" width="158" height="24" rx="2" fill="#3f7fe2"/>
<circle cx="366" cy="884" r="6" fill="#e8e8e8"/><path d="M361 892 365 885 367 888 369 884 373 892z" fill="#f08020"/><path d="M363 892 366 888 370 892z" fill="#e02020"/>
<text x="378" y="889" class="w">屏幕录制</text>
<rect x="1300" y="870" width="140" height="30" fill="url(#tray)"/>
<circle cx="1308" cy="885" r="8" fill="#e4eefc" stroke="#2a62c8" stroke-width="1.500"/><path d="M1310 880 1305 885 1310 890" fill="none" stroke="#2a62c8" stroke-width="2"/>
<rect x="1321" y="880" width="10" height="11" fill="#ddd" stroke="#222"/><path d="M1320 878H1332" stroke="#222" stroke-dasharray="2 1"/>
<circle cx="1346" cy="885" r="8" fill="#e8c030" stroke="#444"/><path d="M1346 880V890M1341 885H1351" stroke="#3a8a30" stroke-width="2.500"/>
<circle cx="1373" cy="885" r="11" fill="#3cc878"/>
<text x="1373" y="889" class="m" style="font-size:11px;fill:#d8f4e0">48</text>
<text x="1400" y="889" style="font-size:11px;fill:#dff0fa;letter-spacing:.5px">8:12</text>
</svg>
</body></html>
